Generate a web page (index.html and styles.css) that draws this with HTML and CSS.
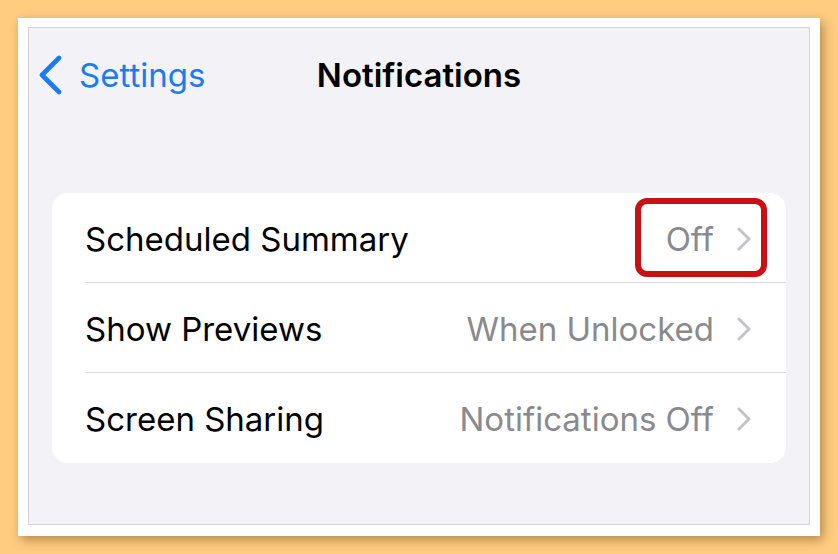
FILE: index.html
```html
<!DOCTYPE html>
<html lang="en">
<head>
    <meta charset="UTF-8">
    <meta name="viewport" content="width=device-width, initial-scale=1.0">
    <title>Notifications</title>
    <link rel="stylesheet" href="styles.css">
</head>
<body>
    <div class="frame">
        <div class="screen">
            <div class="nav">
                <a class="back" href="#">
                    <svg class="back-icon" width="26" height="40" viewBox="0 0 26 40">
                        <path d="M22 3 L5 20 L22 37" fill="none" stroke="#1a7cf5" stroke-width="4.6" stroke-linecap="round" stroke-linejoin="round"/>
                    </svg>
                    <span>Settings</span>
                </a>
                <h1 class="title">Notifications</h1>
                <div></div>
            </div>

            <div class="card">
                <div class="row">
                    <span class="label">Scheduled Summary</span>
                    <span class="value">Off</span>
                    <svg class="chev" width="16" height="24" viewBox="0 0 16 24">
                        <path d="M3 2 L13 12 L3 22" fill="none" stroke="#c4c4c7" stroke-width="3" stroke-linecap="round" stroke-linejoin="round"/>
                    </svg>
                    <div class="highlight"></div>
                </div>
                <div class="row">
                    <span class="label">Show Previews</span>
                    <span class="value">When Unlocked</span>
                    <svg class="chev" width="16" height="24" viewBox="0 0 16 24">
                        <path d="M3 2 L13 12 L3 22" fill="none" stroke="#c4c4c7" stroke-width="3" stroke-linecap="round" stroke-linejoin="round"/>
                    </svg>
                </div>
                <div class="row">
                    <span class="label">Screen Sharing</span>
                    <span class="value">Notifications Off</span>
                    <svg class="chev" width="16" height="24" viewBox="0 0 16 24">
                        <path d="M3 2 L13 12 L3 22" fill="none" stroke="#c4c4c7" stroke-width="3" stroke-linecap="round" stroke-linejoin="round"/>
                    </svg>
                </div>
            </div>
        </div>
    </div>
</body>
</html>
```

FILE: styles.css
```css
body {
    margin: 0;
    background-color: #ffcc80;
    font-family: Inter, "Liberation Sans", Arial, sans-serif;
    height: 554px;
    overflow: hidden;
}
.frame {
    margin: 18px 0 0 18px;
    width: 802px;
    height: 518px;
    box-sizing: border-box;
    padding: 9px 10px 11px 10px;
    background: #fff;
    box-shadow: 3px 4px 10px rgba(90, 60, 10, 0.45);
}
.screen {
    height: 100%;
    box-sizing: border-box;
    border: 1px solid #d4d4d6;
    background: #f2f2f7;
}
.nav {
    display: grid;
    grid-template-columns: 1fr auto 1fr;
    align-items: center;
    height: 94px;
}
.back {
    display: flex;
    align-items: center;
    gap: 16px;
    padding-left: 8px;
    color: #1a7cf5;
    text-decoration: none;
    font-size: 33px;
}
.title {
    margin: 0;
    font-size: 33px;
    font-weight: 600;
    color: #000;
}
.card {
    margin: 71px 23px 0 23px;
    background: #fff;
    border-radius: 16px;
}
.row {
    position: relative;
    display: flex;
    align-items: center;
    height: 90px;
    box-sizing: border-box;
    margin-left: 33px;
    padding: 2px 34px 0 0;
    border-bottom: 1px solid #dcdcdf;
    font-size: 33px;
}
.row:last-child {
    border-bottom: none;
}
.label {
    flex: 1;
    color: #000;
}
.value {
    color: #8a8a8e;
}
.chev {
    margin-left: 22px;
}
.highlight {
    position: absolute;
    right: 19px;
    top: 5px;
    width: 132px;
    height: 79px;
    box-sizing: border-box;
    border: 6px solid #c91014;
    border-radius: 12px;
}
```
